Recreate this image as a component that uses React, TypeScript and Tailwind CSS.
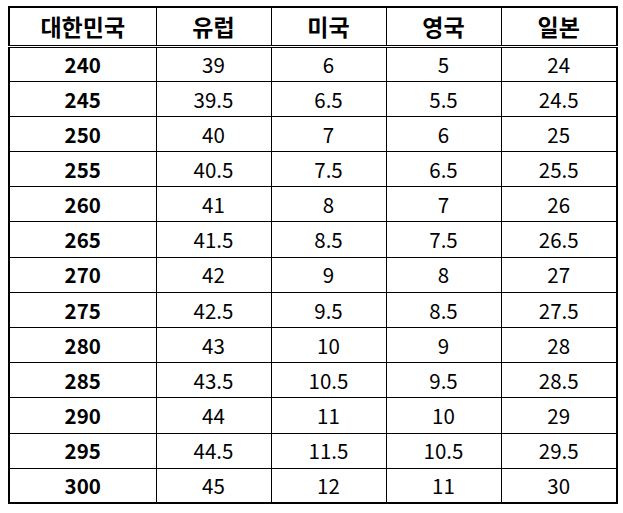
const HEADERS = ["대한민국", "유럽", "미국", "영국", "일본"];

const ROWS: string[][] = [
  ["240", "39", "6", "5", "24"],
  ["245", "39.5", "6.5", "5.5", "24.5"],
  ["250", "40", "7", "6", "25"],
  ["255", "40.5", "7.5", "6.5", "25.5"],
  ["260", "41", "8", "7", "26"],
  ["265", "41.5", "8.5", "7.5", "26.5"],
  ["270", "42", "9", "8", "27"],
  ["275", "42.5", "9.5", "8.5", "27.5"],
  ["280", "43", "10", "9", "28"],
  ["285", "43.5", "10.5", "9.5", "28.5"],
  ["290", "44", "11", "10", "29"],
  ["295", "44.5", "11.5", "10.5", "29.5"],
  ["300", "45", "12", "11", "30"],
];

export default function App() {
  return (
    <div
      className="w-[623px] h-[513px] bg-white pl-[8px] pt-[6px] text-black"
      style={{ fontFamily: '"Noto Sans CJK KR", "Noto Sans", sans-serif' }}
    >
      <table className="w-[608px] table-fixed border-collapse border-2 border-black">
        <colgroup>
          <col className="w-[147px]" />
          <col className="w-[115px]" />
          <col className="w-[115px]" />
          <col className="w-[115px]" />
          <col className="w-[116px]" />
        </colgroup>
        <thead>
          <tr className="h-[39px] border-b-[3px] border-double border-black">
            {HEADERS.map((h) => (
              <th
                key={h}
                className="border-x border-black p-0 text-center align-middle text-[23px] font-bold leading-none"
              >
                {h}
              </th>
            ))}
          </tr>
        </thead>
        <tbody>
          {ROWS.map((row) => (
            <tr key={row[0]} className="h-[35.2px] border-b border-black">
              {row.map((cell, i) => (
                <td
                  key={i}
                  className={`border-x border-black p-0 text-center align-middle text-[20.5px] leading-none ${
                    i === 0 ? "font-bold" : "font-normal"
                  }`}
                >
                  {cell}
                </td>
              ))}
            </tr>
          ))}
        </tbody>
      </table>
    </div>
  );
}
